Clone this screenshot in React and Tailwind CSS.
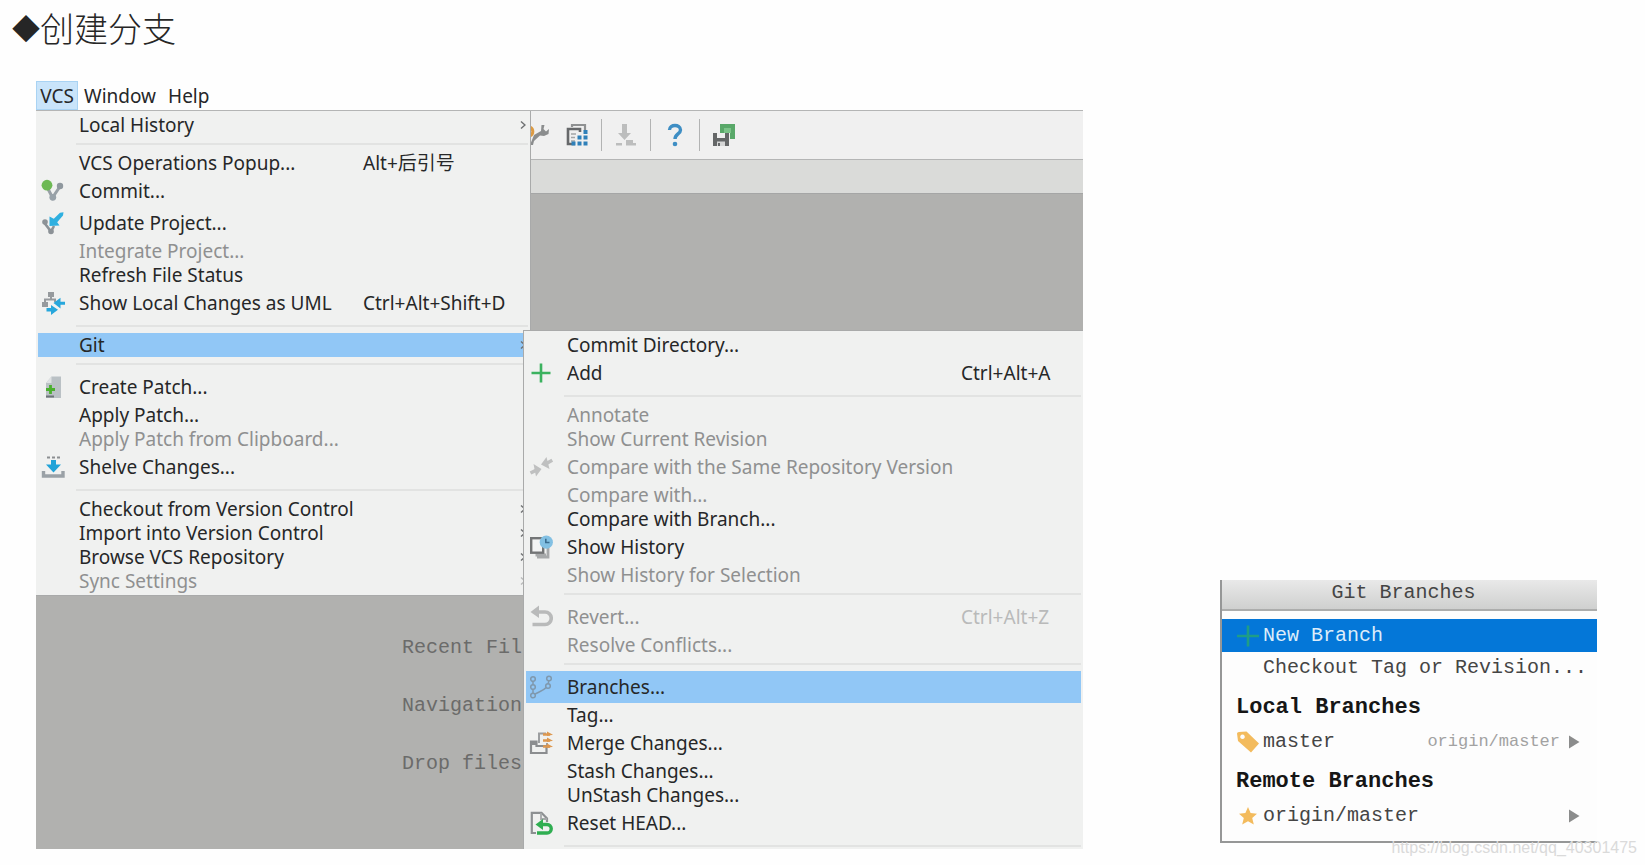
import React from "react";

const G = "#8c9297";

function CommitIcon() {
  return (
    <svg viewBox="0 0 24 24" className="size-6">
      <path d="M6 8 L11.5 18.500 L19 7.500" fill="none" stroke="#98a0a6" strokeWidth="3" />
      <circle cx="19" cy="7" r="3.200" fill="#8f989e" />
      <circle cx="11.800" cy="18.300" r="3.400" fill="#98a2a9" />
      <circle cx="6" cy="6.200" r="5.400" fill="#6db954" />
    </svg>
  );
}

function UpdateIcon() {
  return (
    <svg viewBox="0 0 24 24" className="size-6">
      <path d="M3.500 12 L10 20.500 L13 15" fill="none" stroke={G} strokeWidth="2.600" />
      <circle cx="4" cy="11" r="2.800" fill={G} />
      <circle cx="10" cy="20.500" r="2.800" fill={G} />
      <path d="M22.500 1.200 L19 1.800 L12.800 7.800 L8.500 5.500 L8.500 15 L18.500 14.600 L16.200 11.300 L22 4.500 Z" fill="#2fb0e0" />
    </svg>
  );
}

function UmlIcon() {
  return (
    <svg viewBox="0 0 24 24" className="size-6">
      <path d="M7 1 h6 v5 h-6z M1 11 h6 v5 h-6z" fill="#969a9d" />
      <path d="M10 5 v4.500 M4 12 V8.500 H14 V11" stroke="#969a9d" strokeWidth="2" fill="none" />
      <path d="M24 10.700 h-4.500 v-4 L12.500 12 l7 5.500 v-3.800 H24z" fill="#27a7dc" />
      <path d="M5.500 17 h4.500 v-3 L17 18.800 10 24 v-3.500 H5.500z" fill="#27a7dc" />
    </svg>
  );
}

function CreatePatchIcon() {
  return (
    <svg viewBox="0 0 24 24" className="size-6">
      <path d="M5 8 L10.500 1.500 H20 V23 H5z" fill="#bac1c5" />
      <path d="M5 8 L10.500 1.500 V8z" fill="#dfe2e3" />
      <path d="M9.500 10 v9 M5 14.500 h9" stroke="#4bb02f" strokeWidth="2.800" />
      <path d="M5 21.500 h8" stroke="#6e7478" strokeWidth="2" />
    </svg>
  );
}

function ShelveIcon() {
  return (
    <svg viewBox="0 0 24 24" className="size-6">
      <path d="M6 2.500 h3 M11 2.500 h3 M16 2.500 h3" stroke="#8c8f91" strokeWidth="2.200" />
      <path d="M10 5 h5 v4.500 h5 L12.500 17.500 L5 9.500 h5z" fill="#20a3d8" />
      <path d="M2.500 16 V21 H22 V16" fill="none" stroke="#9aa1a6" strokeWidth="3.400" />
    </svg>
  );
}

function AddIcon() {
  return (
    <svg viewBox="0 0 24 24" className="size-6">
      <path d="M12 2.500 V21.500 M2.500 12 H21.500" stroke="#3bb25f" strokeWidth="2.600" fill="none" />
    </svg>
  );
}

function CompareIcon() {
  return (
    <svg viewBox="0 0 24 24" className="size-6" fill="#bfc0c0" stroke="#bfc0c0">
      <path d="M4.500 9 L12.500 14 L7 21.500z M17.500 2 L12 9.500 L20.500 14z" stroke="none" />
      <path d="M1.500 18 L8 14.800 M23.300 5.200 L17 8.700" strokeWidth="3.600" />
    </svg>
  );
}

function HistoryIcon() {
  return (
    <svg viewBox="0 0 24 24" className="size-6">
      <path d="M6.500 20 H17 M19 11 V22 H8" fill="none" stroke="#a7a9aa" strokeWidth="2.800" />
      <rect x="2.200" y="3.200" width="12" height="14.500" fill="#f3f4f4" stroke="#737576" strokeWidth="2.400" />
      <circle cx="17.300" cy="7.200" r="6.600" fill="#82c0e3" />
      <path d="M16.800 3.700 V7.500 H20.500" stroke="#3a6d90" strokeWidth="1.600" fill="none" />
    </svg>
  );
}

function RevertIcon() {
  return (
    <svg viewBox="0 0 24 24" className="size-6">
      <path d="M8 7 H16 A5.800 5.800 0 0 1 16 19.500 H3.500" fill="none" stroke="#b9baba" strokeWidth="3.600" />
      <path d="M10 0.500 V13 L1.500 7z" fill="#b9baba" />
    </svg>
  );
}

function BranchesIcon() {
  return (
    <svg viewBox="0 0 24 24" className="size-6" fill="none" stroke="#7f98ad" strokeWidth="1.500">
      <circle cx="4" cy="4" r="2.300" />
      <circle cx="4" cy="12" r="2.300" />
      <circle cx="4" cy="20.500" r="2.300" />
      <circle cx="20" cy="3.500" r="2.300" />
      <circle cx="19" cy="11" r="2.300" />
      <path d="M4 6.300 V9.700 M4 14.300 V18.200 M19.800 5.800 L19.200 8.700 M17.200 12.500 C14 16 9 17 6 19.200" />
    </svg>
  );
}

function MergeIcon() {
  return (
    <svg viewBox="0 0 24 24" className="size-6">
      <path d="M10 12 V2.500 H17 M11 15.500 H18 V12" fill="none" stroke="#9c9ea0" strokeWidth="2" />
      <path d="M2 10.500 H7.500 V15 H17.500 V22 H2z" fill="#f0f1f0" stroke="#8b8d8f" strokeWidth="2.200" />
      <path d="M2 12.500 H8" stroke="#8b8d8f" strokeWidth="3" />
      <path d="M14 3.500 H21 M14 9.500 H21 M14 15.500 H21" stroke="#dd9850" strokeWidth="2.400" />
      <path d="M18 0.500 L24 3.800 L18 5z M18 6.500 L24 9.800 L18 11z M18 12.500 L24 15.800 L18 17z" fill="#dd9850" />
    </svg>
  );
}

function ResetIcon() {
  return (
    <svg viewBox="0 0 24 24" className="size-6">
      <path d="M7 22 H2.800 V1.800 H12.500 L18 7.500 V11" fill="none" stroke="#8d9092" strokeWidth="2.200" />
      <path d="M12 2 V8 H18" fill="none" stroke="#a5a8a9" strokeWidth="1.800" />
      <path d="M12 13.500 H18 A4.200 4.200 0 0 1 18 22 H8" fill="none" stroke="#2fae51" strokeWidth="3.400" />
      <path d="M14 8 V19 L6.500 13.500z" fill="#2fae51" />
    </svg>
  );
}

const vcsItems = [
  { label: "Local History", arrow: true },
  null,
  { label: "VCS Operations Popup...", keys: "Alt+后引号" },
  { label: "Commit...", icon: CommitIcon },
  { label: "Update Project...", icon: UpdateIcon },
  { label: "Integrate Project...", off: true },
  { label: "Refresh File Status" },
  { label: "Show Local Changes as UML", icon: UmlIcon, keys: "Ctrl+Alt+Shift+D" },
  null,
  { label: "Git", arrow: true, active: true },
  null,
  { label: "Create Patch...", icon: CreatePatchIcon },
  { label: "Apply Patch..." },
  { label: "Apply Patch from Clipboard...", off: true },
  { label: "Shelve Changes...", icon: ShelveIcon },
  null,
  { label: "Checkout from Version Control", arrow: true },
  { label: "Import into Version Control", arrow: true },
  { label: "Browse VCS Repository", arrow: true },
  { label: "Sync Settings", arrow: true, off: true },
];

const gitItems = [
  { label: "Commit Directory..." },
  { label: "Add", icon: AddIcon, keys: "Ctrl+Alt+A" },
  null,
  { label: "Annotate", off: true },
  { label: "Show Current Revision", off: true },
  { label: "Compare with the Same Repository Version", icon: CompareIcon, off: true },
  { label: "Compare with...", off: true },
  { label: "Compare with Branch..." },
  { label: "Show History", icon: HistoryIcon },
  { label: "Show History for Selection", off: true },
  null,
  { label: "Revert...", icon: RevertIcon, keys: "Ctrl+Alt+Z", off: true },
  { label: "Resolve Conflicts...", off: true },
  null,
  { label: "Branches...", icon: BranchesIcon, active: true },
  { label: "Tag..." },
  { label: "Merge Changes...", icon: MergeIcon },
  { label: "Stash Changes..." },
  { label: "UnStash Changes..." },
  { label: "Reset HEAD...", icon: ResetIcon },
  null,
];

function Menu({ items, keysWidth }) {
  return (
    <ul className="flex flex-col px-[2px]">
      {items.map((item, i) =>
        item === null ? (
          <li key={i} role="separator" className="flex h-[14px] shrink-0 items-center pl-[38px]">
            <span className="h-[2px] w-full bg-[#e2e3e2]" />
          </li>
        ) : (
          <li key={i} className="shrink-0">
            <button
              type="button"
              disabled={item.off}
              className={
                "flex w-full items-center text-left whitespace-nowrap " +
                (item.icon ? "h-8 " : "h-6 ") +
                (item.active ? "bg-[#91c7f6] " : "") +
                (item.off ? "text-[#8f9090]" : "text-[#262728]")
              }
            >
              <span className="flex w-[41px] shrink-0 items-center pl-[3px]">{item.icon && <item.icon />}</span>
              <span className="flex-1">{item.label}</span>
              {item.keys && (
                <span className={keysWidth + (item.off ? " shrink-0 text-[#b9baba]" : " shrink-0")}>{item.keys}</span>
              )}
              {item.arrow && (
                <svg viewBox="0 0 6 10" className="mr-[2px] h-[10px] w-[6px]">
                  <path d="M1 1.500 L5 5 L1 8.500" fill="none" stroke={item.off ? "#b9baba" : "#6f7173"} strokeWidth="1.500" />
                </svg>
              )}
            </button>
          </li>
        )
      )}
    </ul>
  );
}

function Toolbar() {
  return (
    <div className="flex h-[50px] items-center border-y border-[#b4b5b5] bg-[#f0f0f0] pl-[493px]">
      <button type="button" aria-label="Settings">
        <svg viewBox="0 0 20 24" className="h-6 w-5">
          <path d="M1 4 A5 5 0 0 1 1 13" fill="none" stroke="#dc9a43" strokeWidth="3" />
          <path d="M1 22 L5 12 L12 8 L12.500 2 L15.500 2 L14.500 6 L17 8.500 L20 6 L19.500 11 L15 13 L11 12.500 L5 18 L4 22z" fill="#8b8d8e" />
        </svg>
      </button>
      <button type="button" aria-label="Project structure" className="ml-4">
        <svg viewBox="0 0 24 24" className="size-6">
          <path d="M7 4 V2 H20 V8" fill="none" stroke="#8f9192" strokeWidth="2.200" />
          <path d="M10 21 H3 V6 H15 V9" fill="none" stroke="#66686a" strokeWidth="2.600" />
          <path d="M6 11 h5 M6 14.500 h4 M6 18 h4" stroke="#a3a5a6" strokeWidth="1.600" />
          <path d="M18.500 7 h4 v4 h-4z M12.500 12.500 h4 v4 h-4z M18.500 12.500 h4 v4 h-4z M6.500 18.500 h4 v4 h-4z M12.500 18.500 h4 v4 h-4z M18.500 18.500 h4 v4 h-4z" fill="#2f80b9" />
        </svg>
      </button>
      <span className="ml-3 h-8 w-px bg-[#b2b3b3]" />
      <button type="button" aria-label="Download" disabled className="ml-3">
        <svg viewBox="0 0 24 24" className="size-6" fill="#bcbdbd">
          <path d="M8 1 h5 v9 h4 L10.500 17 4 10 h4z" />
          <path d="M2 20 h6 v2.500 H2z M12 17 h7 v3 h3 v2.500 H12z" />
        </svg>
      </button>
      <span className="ml-3 h-8 w-px bg-[#b2b3b3]" />
      <button type="button" aria-label="Help" className="ml-3">
        <svg viewBox="0 0 24 24" className="size-6">
          <path d="M6.500 7 C6.500 1 17.500 1 17.500 7 C17.500 11 12 11 12 16" fill="none" stroke="#3e8ec4" strokeWidth="3.400" />
          <circle cx="12" cy="21" r="2.300" fill="#3e8ec4" />
        </svg>
      </button>
      <span className="ml-3 h-8 w-px bg-[#b2b3b3]" />
      <button type="button" aria-label="Save all" className="ml-3">
        <svg viewBox="0 0 24 24" className="size-6">
          <path d="M8 1 H23 V16 H18 V10 H8z" fill="#59a869" />
          <path d="M12 5 h7 v5 h-7z" fill="#7cc489" />
          <path d="M1 10 h4 v5 h8 v-5 h4 v13 H1z" fill="#656768" />
          <path d="M5 18.500 h8 V23 H5z" fill="#d5d6d6" />
          <path d="M6 20 h2 v3 H6z" fill="#656768" />
        </svg>
      </button>
    </div>
  );
}

function IdeWindow() {
  return (
    <section className="w-full max-w-[1047px] text-[19px] text-[#262728]">
      <nav className="flex h-[29px] items-stretch leading-7">
        <button type="button" className="w-[42px] border border-[#a9d3f3] bg-[#c9e4fa] text-center">VCS</button>
        <button type="button" className="ml-[6px]">Window</button>
        <button type="button" className="ml-3">Help</button>
      </nav>
      <div className="relative h-[739px] overflow-hidden bg-[#b1b1af]">
        <Toolbar />
        <div className="h-[34px] border-b border-[#a5a6a6] bg-[#dadbd9]" />
        <div className="mt-[440px] flex flex-col gap-[30px] pl-[366px] font-['Liberation_Mono','Noto_Sans_CJK_SC',monospace] text-[20px] leading-7 text-[#6b6b6a]">
          <p>Recent Fil</p>
          <p>Navigation</p>
          <p>Drop files</p>
        </div>
        <div className="absolute top-px left-0 w-[495px] border-r border-b border-[#a9aaaa] bg-[#f0f1f0] py-[2px]">
          <Menu items={vcsItems} keysWidth="w-[165px]" />
        </div>
        <div className="absolute top-[220px] right-0 left-[487px] border-t border-l border-[#a9aaaa] bg-[#f0f1f0] pt-[2px]">
          <Menu items={gitItems} keysWidth="w-[120px]" />
        </div>
      </div>
    </section>
  );
}

function Arrow() {
  return (
    <svg viewBox="0 0 12 14" className="h-[14px] w-3">
      <path d="M1 0.500 L11.500 7 L1 13.500z" fill="#8b8c8c" />
    </svg>
  );
}

function BranchesPopup() {
  return (
    <section className="mb-[6px] w-[377px] shrink-0 border-b-2 border-l-2 border-[#969797] bg-[#fdfdfd] pb-[7px] font-['Liberation_Mono','Noto_Sans_CJK_SC',monospace] text-[20px] text-[#454545]">
      <h2 className="flex h-[31px] justify-center border-b-2 border-[#acadac] bg-linear-to-b from-[#e9e9e9] to-[#cfd0cf] pr-3 leading-[26px]">
        Git Branches
      </h2>
      <button type="button" className="mt-2 flex h-[33px] w-full items-center bg-[#0477d8] pl-[14px] text-[#dcecfa]">
        <svg viewBox="0 0 24 24" className="mr-[3px] size-6">
          <path d="M12 1.500 V22.500 M1 12 H23" stroke="#1f9d86" strokeWidth="2.600" />
        </svg>
        New Branch
      </button>
      <button type="button" className="flex h-8 w-full items-center pl-[41px]">Checkout Tag or Revision...</button>
      <h3 className="mt-[6px] flex h-[34px] items-center pl-[14px] text-[22px] font-bold text-[#161616]">Local Branches</h3>
      <button type="button" className="flex h-9 w-full items-center pr-[17px] pl-[14px]">
        <svg viewBox="0 0 24 24" className="mr-[3px] size-6">
          <path fillRule="evenodd" d="M1 3.500 Q1 2 3 2 L10.500 1.500 L23 13.500 L15 22.500 L2 11z M6.500 4.500 a2.300 2.300 0 1 0 0.010 0z" fill="#f3bb5d" />
        </svg>
        <span className="flex-1 text-left">master</span>
        <span className="mr-2 text-[17px] text-[#a2a2a2]">origin/master</span>
        <Arrow />
      </button>
      <h3 className="mt-1 flex h-[34px] items-center pl-[14px] text-[22px] font-bold text-[#161616]">Remote Branches</h3>
      <button type="button" className="flex h-9 w-full items-center pr-[17px] pl-[14px]">
        <svg viewBox="0 0 24 24" className="mr-[3px] size-6">
          <path d="M12 3 L14.600 9 L21 9.700 L16.200 14 L17.800 20.500 L12 17.200 L6.200 20.500 L7.800 14 L3 9.700 L9.400 9z" fill="#f3bb5d" />
        </svg>
        <span className="flex-1 text-left">origin/master</span>
        <Arrow />
      </button>
    </section>
  );
}

export default function App() {
  return (
    <main className="relative bg-[#fefefe] pb-4 font-['Noto_Sans','Noto_Sans_CJK_SC',sans-serif]">
      <h1 className="flex h-[81px] items-start pt-[3px] pl-[12px] font-['Noto_Sans_CJK_SC',sans-serif] text-[34px] leading-[50px] font-light text-[#262626]">
        <span className="text-[28px]">◆</span>
        创建分支
      </h1>
      <div className="flex items-end justify-between gap-6 pr-12 pl-9">
        <IdeWindow />
        <BranchesPopup />
      </div>
      <p className="absolute right-2 bottom-[5px] font-['Liberation_Sans',sans-serif] text-[16px] leading-6 text-[#dadada]">
        https://blog.csdn.net/qq_40301475
      </p>
    </main>
  );
}
